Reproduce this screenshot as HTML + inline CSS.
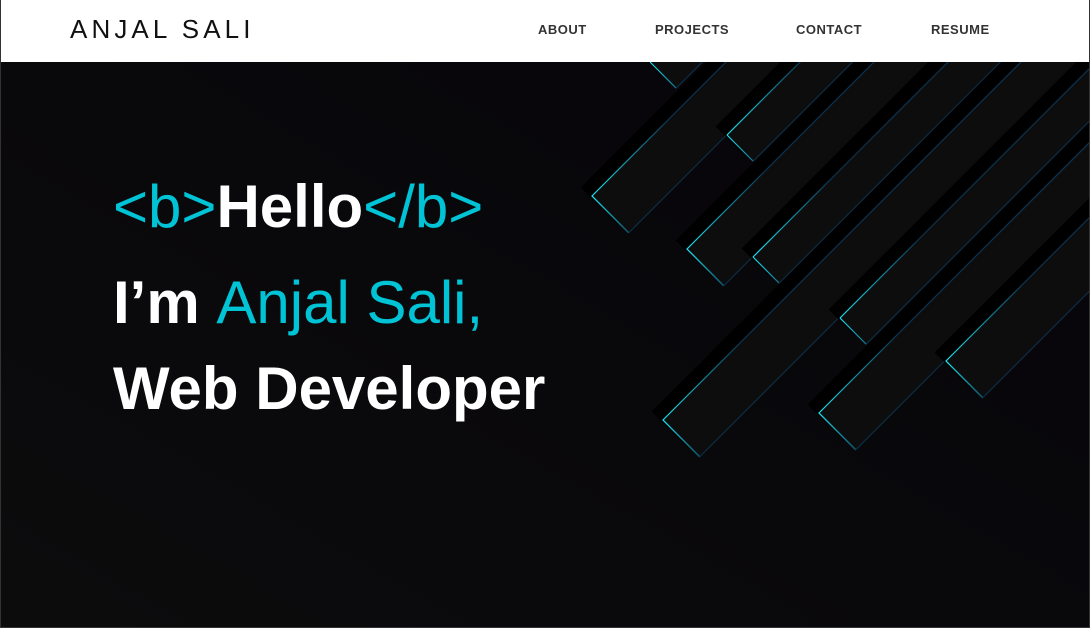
<!DOCTYPE html>
<html><head><meta charset="utf-8">
<style>
html,body{margin:0;padding:0;width:1090px;height:628px;overflow:hidden;}
body{position:relative;font-family:"Liberation Sans",sans-serif;background:#333;}
.page{position:absolute;left:1px;top:0;width:1088px;height:627px;background:linear-gradient(30deg,#0c0c0d 0%,#09080b 45%,#060409 100%);overflow:hidden;}
header{position:absolute;left:0;top:0;width:1088px;height:62px;background:#fff;}
.logo{position:absolute;left:69px;top:14px;font-size:26px;letter-spacing:4.1px;color:#111;}
nav a{position:absolute;top:22px;font-size:13px;letter-spacing:0.5px;color:#333;font-weight:bold;text-decoration:none;}
svg{position:absolute;left:0;top:62px;}
.t{position:absolute;left:112px;font-size:60px;color:#fff;white-space:nowrap;line-height:1;}
.c{color:#00c4d6;font-weight:normal;}
b{font-weight:bold;}
</style></head><body>
<div class="page">
<svg width="1088" height="566" viewBox="1 62 1088 566">
<defs>
<linearGradient id="gx" gradientUnits="userSpaceOnUse" x1="0" y1="0" x2="110" y2="0"><stop offset="0" stop-color="#1fe0ee"/><stop offset="1" stop-color="#0c3350"/></linearGradient>
<linearGradient id="gy" gradientUnits="userSpaceOnUse" x1="0" y1="0" x2="0" y2="52"><stop offset="0" stop-color="#1fe0ee"/><stop offset="1" stop-color="#0d4a66"/></linearGradient>
<g id="b52"><rect x="-2" y="-14" width="900" height="52" fill="#000"/><rect x="0" y="0" width="900" height="52" fill="#0d0d0e"/><path d="M900 0H0V52" fill="none" stroke="url(#gx)" stroke-width="1.2"/><path d="M0 0V52" fill="none" stroke="url(#gy)" stroke-width="1.2"/><path d="M0 52H900" stroke="#0c3048" stroke-width="1.1"/></g>
<g id="b37"><rect x="-2" y="-14" width="900" height="37" fill="#000"/><rect x="0" y="0" width="900" height="37" fill="#0d0d0e"/><path d="M900 0H0" fill="none" stroke="url(#gx)" stroke-width="1.2"/><path d="M0 0V37" fill="none" stroke="url(#gy)" stroke-width="1.2"/><path d="M0 37H900" stroke="#0c3048" stroke-width="1.1"/></g>
</defs>
<use href="#b37" transform="translate(1080,30) rotate(-45)"/>
<use href="#b37" transform="translate(1000,40) rotate(-45)"/>
<use href="#b37" transform="translate(650,62) rotate(-45)"/>
<use href="#b52" transform="translate(592,196) rotate(-45)"/>
<use href="#b37" transform="translate(727,135) rotate(-45)"/>
<use href="#b52" transform="translate(687,249) rotate(-45)"/>
<use href="#b37" transform="translate(753,257) rotate(-45)"/>
<use href="#b52" transform="translate(663,420) rotate(-45)"/>
<use href="#b37" transform="translate(840,318) rotate(-45)"/>
<use href="#b52" transform="translate(819,413) rotate(-45)"/>
<use href="#b52" transform="translate(946,361) rotate(-45)"/>
</svg>
<header>
<div class="logo">ANJAL SALI</div>
<nav><a style="left:537px">ABOUT</a><a style="left:654px">PROJECTS</a><a style="left:795px">CONTACT</a><a style="left:930px">RESUME</a></nav>
</header>
<div class="t" style="top:177px"><span class="c">&lt;b&gt;</span><b>Hello</b><span class="c">&lt;/b&gt;</span></div>
<div class="t" style="top:273px"><b>I’m </b><span class="c">Anjal Sali,</span></div>
<div class="t" style="top:359px"><b>Web Developer</b></div>
</div>
</body></html>
